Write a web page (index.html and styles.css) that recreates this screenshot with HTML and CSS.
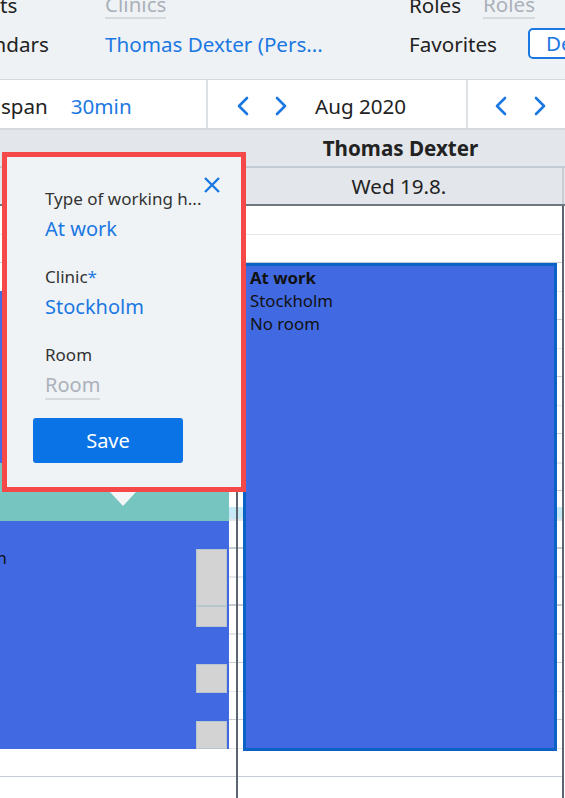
FILE: index.html
```html
<!DOCTYPE html>
<html lang="en">
<head>
    <meta charset="UTF-8">
    <meta name="viewport" content="width=device-width, initial-scale=1.0">
    <title>Calendar - Thomas Dexter</title>
    <link rel="stylesheet" href="styles.css">
</head>
<body>
<div class="app">

    <div class="filters">
        <div class="filter-row">
            <div class="filter-label lead">Clients</div>
            <div class="filter-value"><span class="placeholder">Clinics</span></div>
            <div class="filter-label short">Roles</div>
            <div class="filter-value"><span class="placeholder">Roles</span></div>
        </div>
        <div class="filter-row">
            <div class="filter-label lead">Calendars</div>
            <div class="filter-value link">Thomas Dexter (Pers...</div>
            <div class="filter-label wide">Favorites</div>
            <button class="btn-outline">Default</button>
        </div>
    </div>

    <div class="toolbar">
        <div class="tool tool-span">
            <span>Time span</span>
            <span class="link">30min</span>
        </div>
        <div class="tool tool-month">
            <span class="chevron"><svg width="14" height="20" viewBox="0 0 14 20"><polyline points="11,2 3,10 11,18"/></svg></span>
            <span class="chevron"><svg width="14" height="20" viewBox="0 0 14 20"><polyline points="3,2 11,10 3,18"/></svg></span>
            <span class="month">Aug 2020</span>
        </div>
        <div class="tool tool-week">
            <span class="chevron"><svg width="14" height="20" viewBox="0 0 14 20"><polyline points="11,2 3,10 11,18"/></svg></span>
            <span class="chevron"><svg width="14" height="20" viewBox="0 0 14 20"><polyline points="3,2 11,10 3,18"/></svg></span>
        </div>
    </div>

    <div class="calendar">
        <div class="person-row">
            <div class="person prev"></div>
            <div class="person">Thomas Dexter</div>
        </div>
        <div class="day-row">
            <div class="day prev"></div>
            <div class="day">Wed 19.8.</div>
        </div>
        <div class="cal-body">
            <div class="day-col prev">
                <div class="now-band"></div>
                <div class="event blue ev-a"></div>
                <div class="event teal ev-b"></div>
                <div class="event blue ev-c">
                    <div class="ev-title">At work</div>
                    <div>Kungsholmen</div>
                    <div>No room</div>
                </div>
                <div class="marker m1"></div>
                <div class="marker m2"></div>
                <div class="marker m3"></div>
                <div class="marker m4"></div>
            </div>
            <div class="day-col main">
                <div class="now-band"></div>
                <div class="event blue selected">
                    <div class="ev-title">At work</div>
                    <div>Stockholm</div>
                    <div>No room</div>
                </div>
            </div>
        </div>
    </div>

    <div class="popup">
        <svg class="popup-close" width="18" height="18" viewBox="0 0 18 18"><path d="M2 2 L16 16 M16 2 L2 16"/></svg>
        <div class="field">
            <div class="field-label">Type of working h...</div>
            <div class="field-value">At work</div>
        </div>
        <div class="field">
            <div class="field-label">Clinic<span class="req">*</span></div>
            <div class="field-value">Stockholm</div>
        </div>
        <div class="field last">
            <div class="field-label">Room</div>
            <div class="field-value"><span class="field-input">Room</span></div>
        </div>
        <button class="save">Save</button>
    </div>

</div>
</body>
</html>
```

FILE: styles.css
```css
* { box-sizing: border-box; }
body { margin: 0; font-family: "Noto Sans", "DejaVu Sans", sans-serif; font-size: 20.6px; color: #222; background: #fff; }
.app { position: relative; width: 565px; height: 798px; overflow: hidden; }
.link { color: #1b78e2; }

/* filters */
.filters { background: #eff2f5; margin-top: -15px; padding-bottom: 16px; border-bottom: 1px solid #d3d8dd; }
.filter-row { display: flex; align-items: center; height: 39px; white-space: nowrap; }
.filter-label.lead { margin-left: -48px; width: 153px; flex: none; }
.filter-value { width: 304px; flex: none; overflow: hidden; }
.filter-label.short { width: 74px; flex: none; }
.filter-label.wide { width: 119px; flex: none; }
.placeholder { display: inline-block; color: #aab1b9; line-height: 26px; border-bottom: 2px solid #d5dade; }
.btn-outline { flex: none; font: inherit; color: #1b78e2; background: #fff; border: 2px solid #1b78e2; border-radius: 5px; height: 31px; padding: 0 16px; line-height: 25px; }

/* toolbar */
.toolbar { display: flex; height: 50px; padding-top: 4px; background: #fff; border-bottom: 2px solid #d6dade; white-space: nowrap; }
.tool { display: flex; align-items: center; flex: none; margin-top: -4px; padding-top: 4px; border-right: 2px solid #dde1e5; }
.tool-span { margin-left: -52px; width: 260px; gap: 23px; }
.tool-month { width: 260px; padding-left: 28px; gap: 24px; }
.tool-month .month { margin-left: 3px; }
.tool-week { flex: 1; padding-left: 26px; gap: 25px; border-right: none; }
.chevron { display: flex; }
.chevron polyline { fill: none; stroke: #1b78e2; stroke-width: 2.6; stroke-linecap: round; stroke-linejoin: round; }

/* calendar */
.person-row, .day-row { display: flex; height: 38px; background: #e3e6ea; }
.person-row { border-bottom: 2px solid #c4cad1; }
.day-row { border-bottom: 2px solid #6f7780; }
.person, .day { display: flex; align-items: center; justify-content: center; }
.person.prev, .day.prev { width: 236px; flex: none; }
.person { flex: 1; font-weight: bold; }
.day { width: 328px; flex: none; border-right: 2px solid #c9ced4; }

.cal-body { display: flex; height: 600px; }
.day-col {
    position: relative;
    flex: none;
    background: repeating-linear-gradient(180deg,
        #fff 0, #fff 27.8px, #e4e8ec 27.8px, #e4e8ec 29.2px,
        #fff 29.2px, #fff 55.9px, #c7cdd4 55.9px, #c7cdd4 57.1px);
}
.day-col.prev { width: 236px; }
.day-col.main { width: 328px; border-left: 2px solid #5c656e; border-right: 2px solid #5c656e; }
.now-band { position: absolute; left: 0; right: 0; top: 301px; height: 12px; background: #c6e9f5; }

.event { position: absolute; font-size: 16.8px; line-height: 23px; color: #111; white-space: nowrap; overflow: hidden; }
.event.blue { background: #4169e1; }
.event.teal { background: #76c5c0; }
.ev-title { font-weight: bold; }
.ev-a { left: -100px; right: 7px; top: 85px; height: 172px; }
.ev-b { left: -100px; right: 7px; top: 257px; height: 58px; }
.ev-c { left: -110px; right: 7px; top: 315px; height: 228px; padding: 2px 7px; }
.event.selected { left: 5px; right: 5px; top: 56.5px; height: 488.5px; border: 3px solid #0b62c4; padding: 0 4px; }

.marker { position: absolute; right: 9px; width: 31px; background: #d3d3d3; border: 1px solid #b9c5cc; }
.m1 { top: 343px; height: 57px; }
.m2 { top: 400px; height: 21px; }
.m3 { top: 458px; height: 29px; }
.m4 { top: 515px; height: 28px; }

/* popup */
.popup { position: absolute; left: 2px; top: 152px; width: 244px; height: 340px; border: 5px solid #f54848; background: #f0f3f6; padding: 31px 0 0 26px; z-index: 10; }
.popup::after { content: ""; position: absolute; left: 103px; top: calc(100% + 5px); width: 26px; height: 14px; background: #f3f5f7; clip-path: polygon(0 0, 100% 0, 50% 100%); }
.popup-close { position: absolute; top: 19px; left: 196px; }
.popup-close path { stroke: #1b78e2; stroke-width: 2.4; fill: none; }
.field { margin-left: 12px; margin-bottom: 23px; }
.field.last { margin-bottom: 18px; }
.field-label { font-size: 17px; line-height: 22px; color: #333; }
.req { color: #1b78e2; }
.field-value { font-size: 20px; line-height: 28px; color: #1b78e2; margin-top: 5px; }
.field-input { display: inline-block; color: #aab1b9; line-height: 26px; border-bottom: 2px solid #d5dade; }
.save { width: 150px; height: 45px; background: #0a74e6; color: #fff; border: 0; border-radius: 3px; font: inherit; font-size: 20px; cursor: pointer; }
```
